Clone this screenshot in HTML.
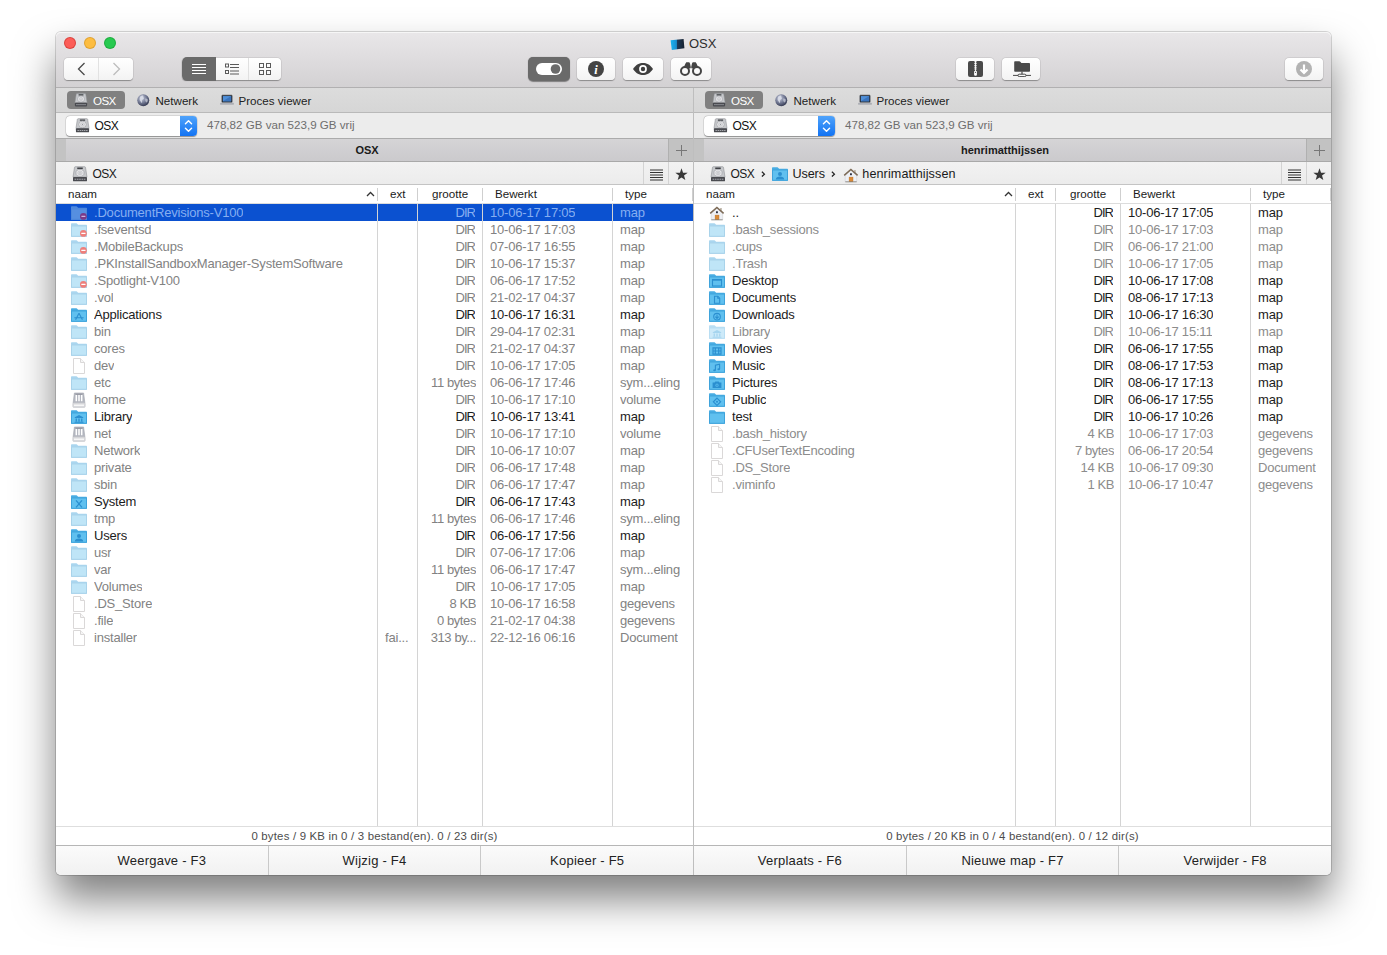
<!DOCTYPE html>
<html lang="nl"><head><meta charset="utf-8"><title>OSX</title>
<style>
*{box-sizing:border-box;margin:0;padding:0}
html,body{width:1387px;height:955px;background:#fff;overflow:hidden}
body{font-family:"Liberation Sans",sans-serif;font-size:13px;color:#1c1c1c;position:relative}
.win{position:absolute;left:56px;top:32px;width:1275px;height:843px;border-radius:5px;background:#fff;
 box-shadow:0 0 0 1px rgba(0,0,0,.15),0 24px 40px rgba(0,0,0,.5);}
.tb{position:absolute;left:0;top:0;width:1275px;height:56px;border-radius:5px 5px 0 0;
 background:linear-gradient(#e9e7e9,#d3d1d3);border-bottom:1px solid #b1b0b1;box-shadow:inset 0 1px 0 #f6f6f6}
.tl{position:absolute;top:5px;width:12px;height:12px;border-radius:50%}
.tl.r{left:8px;background:#fc5d58;border:1px solid rgba(214,60,54,.85)}
.tl.y{left:28px;background:#fdbd41;border:1px solid rgba(220,158,44,.85)}
.tl.g{left:48px;background:#27c950;border:1px solid rgba(26,168,58,.85)}
.title{position:absolute;left:614px;top:4px;height:16px;line-height:16px;font-size:13px;color:#2c2c2c;white-space:nowrap}
.title svg{position:absolute;left:0;top:1.500px}
.title span{position:absolute;left:19px;top:0}
.btn{position:absolute;top:26px;height:22px;border-radius:4px;background:linear-gradient(#fff,#f3f3f3);
 box-shadow:0 .5px 1px rgba(0,0,0,.32),0 0 0 .5px rgba(0,0,0,.08)}
.btn.dark{background:#6a6a6a;box-shadow:0 .5px 1px rgba(0,0,0,.4)}
.btn svg{position:absolute}
.seg{position:absolute;top:0;height:22px}
.pane{position:absolute;top:56px;width:637px;height:757px}
.lp{left:0}.rp{left:638px}
.mid{position:absolute;left:637px;top:56px;width:1px;height:787px;background:#bebebe}
.fav{position:absolute;left:0;top:0;width:637px;height:25px;background:linear-gradient(#dcdcdc,#d6d6d6);border-bottom:1px solid #b9b9b9}
.favbtn{position:absolute;top:3px;height:18px;line-height:18px;white-space:nowrap;color:#222}
.favbtn .ic{position:absolute;left:6.500px;top:1.500px;width:14px;height:14px}
.favbtn.nw .ic{left:6.500px;top:1.500px;width:14.500px;height:14.500px}.favbtn.pv .ic{left:7.500px;top:1.800px;width:14px;height:14px}
.favbtn .t{position:absolute;left:26px;top:1px;font-size:11.6px}
.favbtn.on{left:11px;width:58px;background:#808080;border-radius:4px;color:#fff}.favbtn.on .t{letter-spacing:-.6px}
.favbtn.nw{left:73.500px}.favbtn.pv{left:156.500px}
.drv{position:absolute;left:0;top:25px;width:637px;height:25px;background:#ececec}
.select{position:absolute;left:10px;top:3px;width:131px;height:20px;border-radius:4px;background:#fff;
 box-shadow:0 .5px 1px rgba(0,0,0,.35),0 0 0 .5px rgba(0,0,0,.12)}
.select .ic{position:absolute;left:9px;top:1.800px;width:15px;height:15px}
.select .t{position:absolute;left:28.500px;top:2px;font-size:12px;letter-spacing:-.5px;line-height:16px;color:#111}
.select .arr{position:absolute;right:0;top:0;width:17px;height:20px;border-radius:0 4px 4px 0;background:linear-gradient(#4fa3fb,#1273f3)}
.free{position:absolute;left:151px;top:4px;font-size:11.6px;line-height:16px;color:#6e6e6e;white-space:nowrap}
.tabs{position:absolute;left:0;top:50px;width:637px;height:24px;background:linear-gradient(#d5d4d6,#cbcacd);border-top:1px solid #ababab;border-bottom:1px solid #a9a9a9}
.tabs .stub{position:absolute;left:0;top:0;width:10px;height:22px;background:#c3c3c3}
.tabname{position:absolute;left:10px;width:602px;top:0;height:22px;line-height:23px;text-align:center;font-weight:bold;font-size:11px;color:#1a1a1a}
.plus{position:absolute;left:612px;top:0;width:25px;height:22px;background:#c2c2c2;border-left:1px solid #b0b0b0}
.plus svg{position:absolute;left:6px;top:5px}
.path{position:absolute;left:0;top:74px;width:637px;height:23px;background:linear-gradient(#f2f2f2,#ececec);border-bottom:1px solid #c4c4c4}
.crumb{position:absolute;left:0;top:0;height:22px;width:580px;font-size:12.6px;color:#1a1a1a;white-space:nowrap}
.crumb .ic,.crumb .t,.crumb .sep{position:absolute}
.crumb .t{top:4px;line-height:17px;letter-spacing:-.1px}
.crumb .t.osx{font-size:12px;letter-spacing:-.5px}
.crumb .sep{top:8.500px}
.pbtn{position:absolute;top:0;height:22px;width:25px;border-left:1px solid #d3d3d3;text-align:center}
.pbtn.lst{left:587px}.pbtn.star{left:612px}.pbtn.star svg{position:absolute;left:5.500px;top:6px}
.pbtn.lst svg{position:absolute;left:6px;top:6.500px}
.hdr{position:absolute;left:0;top:97px;width:637px;height:19px;background:#fff;border-bottom:1px solid #dcdcdc;font-size:11.6px;color:#1a1a1a}
.hdr .h{position:absolute;top:1px;line-height:15px}
.hn{left:12px}.he{left:334px}.hs{left:376px}.hd{left:439px}.ht{left:569px}
.sort{position:absolute;left:310px;top:6px}
.sort svg{display:block}
.hdr i{position:absolute;top:3px;width:1px;height:13px;background:#cfcfcf}
.hs1{left:321px}.hs2{left:361px}.hs3{left:426px}.hs4{left:556px}.hs5{left:636px}
.list{position:absolute;left:0;top:116px;width:637px;height:622px;background:#fff;overflow:hidden}
.v{position:absolute;top:0;width:1px;height:622px;background:#d4d4d4;z-index:2}
.v1{left:321px}.v2{left:361px}.v3{left:426px}.v4{left:556px}
.row{position:relative;height:17px;line-height:17px;white-space:nowrap;color:#1c1c1c;letter-spacing:-.2px}
.row.hid{color:#828282}.rp .row.hid{color:#8c8c8c}
.row.sel{background:#0b51d0;color:#86aef0}
.row .ic{position:absolute;left:15px;top:1px}
.c{position:absolute;top:0;height:17px;overflow:hidden}
.nm{left:38px}.ex{left:329px}.sz{left:362px;width:58px;text-align:right;letter-spacing:-.4px}.sz.dir{letter-spacing:-1.100px;width:56.700px}.dt{left:434px}.ty{left:564px}
.status{position:absolute;left:0;top:738px;width:637px;height:19px;border-top:1px solid #dedede;background:#fff;text-align:center;font-size:11.4px;letter-spacing:.2px;line-height:18px;color:#4c4c4c}
.fbar{position:absolute;left:0;top:813px;width:1275px;height:30px;border-top:1px solid #b6b6b6;border-radius:0 0 5px 5px;
 background:linear-gradient(#fbfbfb,#f1f1f1);display:flex;overflow:hidden}
.fbar span{flex:1 1 0;text-align:center;line-height:30.500px;font-size:13px;letter-spacing:.22px;color:#222;border-left:1px solid #c9c9c9}
.fbar span:first-child{border-left:0}

</style></head><body>
<div class="win">
<div class="tb">
  <i class="tl r"></i><i class="tl y"></i><i class="tl g"></i>
  <div class="title"><svg width="15" height="13" viewBox="0 0 15 13"><defs><linearGradient id="tg" x1="0" y1="0" x2="1" y2="0"><stop offset="0" stop-color="#19b4f0"/><stop offset=".42" stop-color="#1a8fd0"/><stop offset=".5" stop-color="#1d3a58"/><stop offset="1" stop-color="#16202e"/></linearGradient></defs><path d="M.6 2.300 13.600 .900l.8 9.400L1.800 12z" fill="url(#tg)"/></svg><span>OSX</span></div>
  <div class="btn" style="left:8px;width:69px">
    <svg style="left:13px;top:4px" width="9" height="14" viewBox="0 0 9 14"><path d="M7.500 1 1.500 7l6 6" fill="none" stroke="#4a4a4a" stroke-width="1.300"/></svg>
    <i style="position:absolute;left:34px;top:0;width:1px;height:22px;background:#e2e2e2"></i>
    <svg style="left:48px;top:4px" width="9" height="14" viewBox="0 0 9 14"><path d="M1.500 1l6 6-6 6" fill="none" stroke="#bdbdbd" stroke-width="1.300"/></svg>
  </div>
  <div class="btn" style="left:126px;width:99px">
    <span class="seg" style="left:0;top:-1px;height:24px;width:34px;background:#6a6a6a;border-radius:5px 0 0 5px">
      <svg style="left:10px;top:6px" width="14" height="12" viewBox="0 0 14 12"><path d="M0 1.500h14M0 4.500h14M0 7.500h14M0 10.500h14" stroke="#fff" stroke-width="1.200"/></svg></span>
    <i style="position:absolute;left:66px;top:0;width:1px;height:22px;background:#e0e0e0"></i>
    <svg style="left:43px;top:5px" width="14" height="12" viewBox="0 0 14 12"><path d="M5 1.500h9M5 4.500h9M5 8h9M5 11h9" stroke="#5a5a5a" stroke-width="1"/><rect x=".5" y="1" width="3" height="3" fill="none" stroke="#5a5a5a"/><rect x=".5" y="7.500" width="3" height="3" fill="none" stroke="#5a5a5a"/></svg>
    <svg style="left:77px;top:5px" width="12" height="12" viewBox="0 0 12 12"><rect x=".5" y=".5" width="4" height="4" fill="none" stroke="#5a5a5a"/><rect x="7.500" y=".5" width="4" height="4" fill="none" stroke="#5a5a5a"/><rect x=".5" y="7.500" width="4" height="4" fill="none" stroke="#5a5a5a"/><rect x="7.500" y="7.500" width="4" height="4" fill="none" stroke="#5a5a5a"/></svg>
  </div>
  <div class="btn dark" style="left:472px;width:42px;top:25px;height:24px;border-radius:5px">
    <svg style="left:8px;top:6px" width="26" height="12" viewBox="0 0 26 12"><rect x="0" y="0" width="26" height="12" rx="6" fill="#fff"/><circle cx="19.500" cy="6" r="4.800" fill="#6a6a6a"/></svg>
  </div>
  <div class="btn" style="left:521px;width:38px">
    <svg style="left:11px;top:3px" width="16" height="16" viewBox="0 0 16 16"><circle cx="8" cy="8" r="8" fill="#444"/><text x="8.100" y="12.600" text-anchor="middle" font-family="Liberation Serif,serif" font-style="italic" font-weight="bold" font-size="12.500" fill="#fff">i</text></svg>
  </div>
  <div class="btn" style="left:567px;width:40px">
    <svg style="left:10px;top:5px" width="20" height="12" viewBox="0 0 20 12"><path d="M0 6C3 1.500 6.500 0 10 0s7 1.500 10 6c-3 4.500-6.500 6-10 6S3 10.500 0 6z" fill="#3f3f3f"/><circle cx="10" cy="6" r="3.900" fill="#fff"/><circle cx="10" cy="6" r="2.200" fill="#3f3f3f"/></svg>
  </div>
  <div class="btn" style="left:615px;width:40px">
    <svg style="left:8px;top:4px" width="24" height="14" viewBox="0 0 24 14"><path d="M6.500 1.600 7.300 .3h3l.7 1.300.8 3.400h.4l.8-3.400.7-1.300h3l.8 1.300L20.500 8h-5V6.600h-7V8h-5z" fill="#444"/><circle cx="6" cy="9" r="4" fill="#fafafa" stroke="#444" stroke-width="2"/><circle cx="18" cy="9" r="4" fill="#fafafa" stroke="#444" stroke-width="2"/><circle cx="12" cy="6.300" r=".8" fill="#fafafa"/></svg>
  </div>
  <div class="btn" style="left:900px;width:38px">
    <svg style="left:12px;top:3px" width="15" height="16" viewBox="0 0 15 16"><rect x="0" y="0" width="15" height="16" rx="2" fill="#4a4a4a"/><path d="M6.500 0h2v10h-2z" fill="#4a4a4a"/><path d="M6.300 .8h2.400M6.300 2.600h2.400M6.300 4.400h2.400M6.300 6.200h2.400M6.300 8h2.400" stroke="#fff" stroke-width="1"/><path d="M7.500 0v10" stroke="#fff" stroke-width=".9"/><rect x="6.100" y="9.800" width="2.800" height="5" rx="1" fill="#fff"/><circle cx="7.500" cy="11.300" r=".6" fill="#4a4a4a"/></svg>
  </div>
  <div class="btn" style="left:946px;width:38px">
    <svg style="left:11px;top:3px" width="18" height="16" viewBox="0 0 18 16"><path d="M1.200 1c0-.5.300-.8.800-.8h4.300c.4 0 .7.200 1 .5l1.100 1.300h7.800c.5 0 .8.300.8.800V10c0 .5-.3.800-.8.800H2c-.5 0-.8-.3-.8-.8z" fill="#4a4a4a"/><path d="M9 10.500v3.200" stroke="#4a4a4a" stroke-width="1.200"/><path d="M0 14.400h18" stroke="#4a4a4a" stroke-width="1"/><rect x="5" y="13.200" width="8" height="2.400" rx="1.200" fill="#fafafa" stroke="#4a4a4a" stroke-width="1"/></svg>
  </div>
  <div class="btn" style="left:1229px;width:38px">
    <svg style="left:11px;top:3px" width="16" height="16" viewBox="0 0 16 16"><circle cx="8" cy="8" r="8" fill="#b3b3b3"/><path d="M8 3.500v8M4.500 8.500 8 12l3.500-3.500" fill="none" stroke="#fff" stroke-width="2.200"/></svg>
  </div>
</div>


<div class="pane lp">
  <div class="fav">
    <span class="favbtn on"><svg class="ic" width="16" height="16" viewBox="0 0 16 16"><path d="M3.400 .700h9.200c.5 0 .8.300.9.700l1.500 9.800H1l1.500-9.800c.1-.4.400-.7.900-.7z" fill="#c6c8cb" stroke="#8d8f94" stroke-width=".6"/><rect x="5.200" y="1.500" width="5.600" height="1.400" rx=".3" fill="#3e4045"/><ellipse cx="8" cy="6.900" rx="4.100" ry="3.500" fill="#e6e6e8" stroke="#a0a2a7" stroke-width=".7"/><ellipse cx="8" cy="6.900" rx="2.100" ry="1.800" fill="none" stroke="#b4b6bb" stroke-width=".6"/><circle cx="8" cy="6.900" r=".7" fill="#9a9ca1"/><rect x="1" y="11" width="14" height="4.300" rx=".9" fill="#4a4b50"/><path d="M2.600 13.300h10.800" stroke="#a6a8ad" stroke-width="1.100" stroke-dasharray="1.600 .7"/></svg><span class="t">OSX</span></span>
    <span class="favbtn nw"><svg class="ic" width="16" height="16" viewBox="0 0 16 16"><defs><radialGradient id="gg" cx=".38" cy=".32" r=".75"><stop offset="0" stop-color="#c9cdde"/><stop offset=".55" stop-color="#6f7690"/><stop offset="1" stop-color="#2b3048"/></radialGradient></defs><circle cx="8" cy="8" r="6.600" fill="url(#gg)"/><path d="M5 3.500c1-.8 2.300-.9 3.200-.4-.4 1-.2 1.800.6 2.400-.2 1.100-1.100 1.400-1.900 2.200-.5 1 .3 2.100-.4 3.300-1-.7-1.300-1.800-2.100-2.700-.6-1-.4-3.400.6-4.800z" fill="#dfe2ec" opacity=".8"/><path d="M10.200 6.200c1-.3 2 .2 2.800 1 .2 1.300-.3 2.500-1.300 3.400-.8-.6-1.500-1.500-1.500-2.600z" fill="#dfe2ec" opacity=".6"/></svg><span class="t">Netwerk</span></span>
    <span class="favbtn pv"><svg class="ic" width="16" height="16" viewBox="0 0 16 16"><rect x="2.200" y="2.500" width="11.600" height="8" rx=".6" fill="#2e3540" stroke="#20242c" stroke-width=".6"/><rect x="3.300" y="3.500" width="9.400" height="6" fill="#4f8fd8"/><path d="M3.300 9.500 12.700 3.500v6z" fill="#3a74bd"/><path d="M1 11.300h14l.6 1.600H.400z" fill="#b9bcc4" stroke="#8b8e96" stroke-width=".5"/></svg><span class="t">Proces viewer</span></span>
  </div>
  <div class="drv">
    <span class="select"><svg class="ic" width="16" height="16" viewBox="0 0 16 16"><path d="M3.400 .700h9.200c.5 0 .8.300.9.700l1.500 9.800H1l1.500-9.800c.1-.4.400-.7.900-.7z" fill="#c6c8cb" stroke="#8d8f94" stroke-width=".6"/><rect x="5.200" y="1.500" width="5.600" height="1.400" rx=".3" fill="#3e4045"/><ellipse cx="8" cy="6.900" rx="4.100" ry="3.500" fill="#e6e6e8" stroke="#a0a2a7" stroke-width=".7"/><ellipse cx="8" cy="6.900" rx="2.100" ry="1.800" fill="none" stroke="#b4b6bb" stroke-width=".6"/><circle cx="8" cy="6.900" r=".7" fill="#9a9ca1"/><rect x="1" y="11" width="14" height="4.300" rx=".9" fill="#4a4b50"/><path d="M2.600 13.300h10.800" stroke="#a6a8ad" stroke-width="1.100" stroke-dasharray="1.600 .7"/></svg><span class="t">OSX</span><span class="arr"><svg width="17" height="20" viewBox="0 0 17 21"><path d="M5.300 8.200 8.500 5l3.200 3.200M5.300 12.800 8.500 16l3.200-3.200" fill="none" stroke="#fff" stroke-width="1.500" stroke-linecap="round" stroke-linejoin="round"/></svg></span></span>
    <span class="free">478,82 GB van 523,9 GB vrij</span>
  </div>
  <div class="tabs"><span class="stub"></span><span class="tabname">OSX</span><span class="plus"><svg width="13" height="13" viewBox="0 0 13 13"><path d="M6.500 1v11M1 6.500h11" stroke="#777" stroke-width="1"/></svg></span></div>
  <div class="path"><span class="crumb"><svg class="ic" style="left:16px;top:4px" width="16" height="16" viewBox="0 0 16 16"><path d="M3.400 .700h9.200c.5 0 .8.300.9.700l1.500 9.800H1l1.500-9.800c.1-.4.400-.7.900-.7z" fill="#c6c8cb" stroke="#8d8f94" stroke-width=".6"/><rect x="5.200" y="1.500" width="5.600" height="1.400" rx=".3" fill="#3e4045"/><ellipse cx="8" cy="6.900" rx="4.100" ry="3.500" fill="#e6e6e8" stroke="#a0a2a7" stroke-width=".7"/><ellipse cx="8" cy="6.900" rx="2.100" ry="1.800" fill="none" stroke="#b4b6bb" stroke-width=".6"/><circle cx="8" cy="6.900" r=".7" fill="#9a9ca1"/><rect x="1" y="11" width="14" height="4.300" rx=".9" fill="#4a4b50"/><path d="M2.600 13.300h10.800" stroke="#a6a8ad" stroke-width="1.100" stroke-dasharray="1.600 .7"/></svg><span class="t osx" style="left:36.500px">OSX</span></span><span class="pbtn lst"><svg width="13" height="12" viewBox="0 0 13 12"><path d="M0 1h13M0 3.500h13M0 6h13M0 8.500h13M0 11h13" stroke="#333" stroke-width="1"/></svg></span><span class="pbtn star"><svg width="13" height="13" viewBox="0 0 13 13"><path d="M6.50 0.30L8.06 4.66L12.68 4.79L9.02 7.62L10.32 12.06L6.50 9.45L2.68 12.06L3.98 7.62L0.32 4.79L4.94 4.66z" fill="#383838"/></svg></span></div>
  <div class="hdr"><span class="h hn">naam</span><span class="sort"><svg width="9" height="6" viewBox="0 0 9 6"><path d="M1 5 4.500 1.500 8 5" fill="none" stroke="#333" stroke-width="1.300"/></svg></span><span class="h he">ext</span><span class="h hs">grootte</span><span class="h hd">Bewerkt</span><span class="h ht">type</span>
    <i class="hs1"></i><i class="hs2"></i><i class="hs3"></i><i class="hs4"></i><i class="hs5"></i></div>
  <div class="list">
    <i class="v v1"></i><i class="v v2"></i><i class="v v3"></i><i class="v v4"></i>
<div class="row hid sel"><svg class="ic" width="16" height="16" viewBox="0 0 16 16"><g opacity=".42"><path d="M0 2.300c0-.6.4-1 1-1h4.300c.5 0 .8.200 1.100.6l.7.900H15c.6 0 1 .4 1 1V14.800H0z" fill="#aad6ef"/><path d="M.5 4h15v10.300H.5z" fill="#bfe5f7" stroke="#a9d3ea" stroke-width="1"/></g><circle cx="12.400" cy="11.400" r="3.400" fill="#7a3a88"/><rect x="10.400" y="10.800" width="4" height="1.200" rx=".3" fill="#c9b3e2"/></svg><span class="c nm">.DocumentRevisions-V100</span><span class="c ex"></span><span class="c sz dir">DIR</span><span class="c dt">10-06-17 17:05</span><span class="c ty">map</span></div>
<div class="row hid"><svg class="ic" width="16" height="16" viewBox="0 0 16 16"><g><path d="M0 2.300c0-.6.4-1 1-1h4.300c.5 0 .8.200 1.100.6l.7.900H15c.6 0 1 .4 1 1V14.800H0z" fill="#aad6ef"/><path d="M.5 4h15v10.300H.5z" fill="#bfe5f7" stroke="#a9d3ea" stroke-width="1"/></g><circle cx="12.400" cy="11.400" r="3.400" fill="#ef7f7b"/><rect x="10.300" y="10.700" width="4.200" height="1.400" rx=".3" fill="#fff"/></svg><span class="c nm">.fseventsd</span><span class="c ex"></span><span class="c sz dir">DIR</span><span class="c dt">10-06-17 17:03</span><span class="c ty">map</span></div>
<div class="row hid"><svg class="ic" width="16" height="16" viewBox="0 0 16 16"><g><path d="M0 2.300c0-.6.4-1 1-1h4.300c.5 0 .8.200 1.100.6l.7.900H15c.6 0 1 .4 1 1V14.800H0z" fill="#aad6ef"/><path d="M.5 4h15v10.300H.5z" fill="#bfe5f7" stroke="#a9d3ea" stroke-width="1"/></g><circle cx="12.400" cy="11.400" r="3.400" fill="#ef7f7b"/><rect x="10.300" y="10.700" width="4.200" height="1.400" rx=".3" fill="#fff"/></svg><span class="c nm">.MobileBackups</span><span class="c ex"></span><span class="c sz dir">DIR</span><span class="c dt">07-06-17 16:55</span><span class="c ty">map</span></div>
<div class="row hid"><svg class="ic" width="16" height="16" viewBox="0 0 16 16"><g><path d="M0 2.300c0-.6.4-1 1-1h4.300c.5 0 .8.200 1.100.6l.7.900H15c.6 0 1 .4 1 1V14.800H0z" fill="#aad6ef"/><path d="M.5 4h15v10.300H.5z" fill="#bfe5f7" stroke="#a9d3ea" stroke-width="1"/></g></svg><span class="c nm">.PKInstallSandboxManager-SystemSoftware</span><span class="c ex"></span><span class="c sz dir">DIR</span><span class="c dt">10-06-17 15:37</span><span class="c ty">map</span></div>
<div class="row hid"><svg class="ic" width="16" height="16" viewBox="0 0 16 16"><g><path d="M0 2.300c0-.6.4-1 1-1h4.300c.5 0 .8.200 1.100.6l.7.900H15c.6 0 1 .4 1 1V14.800H0z" fill="#aad6ef"/><path d="M.5 4h15v10.300H.5z" fill="#bfe5f7" stroke="#a9d3ea" stroke-width="1"/></g><circle cx="12.400" cy="11.400" r="3.400" fill="#ef7f7b"/><rect x="10.300" y="10.700" width="4.200" height="1.400" rx=".3" fill="#fff"/></svg><span class="c nm">.Spotlight-V100</span><span class="c ex"></span><span class="c sz dir">DIR</span><span class="c dt">06-06-17 17:52</span><span class="c ty">map</span></div>
<div class="row hid"><svg class="ic" width="16" height="16" viewBox="0 0 16 16"><g><path d="M0 2.300c0-.6.4-1 1-1h4.300c.5 0 .8.200 1.100.6l.7.900H15c.6 0 1 .4 1 1V14.800H0z" fill="#aad6ef"/><path d="M.5 4h15v10.300H.5z" fill="#bfe5f7" stroke="#a9d3ea" stroke-width="1"/></g></svg><span class="c nm">.vol</span><span class="c ex"></span><span class="c sz dir">DIR</span><span class="c dt">21-02-17 04:37</span><span class="c ty">map</span></div>
<div class="row"><svg class="ic" width="16" height="16" viewBox="0 0 16 16"><g><path d="M0 2.300c0-.6.4-1 1-1h4.300c.5 0 .8.200 1.100.6l.7.900H15c.6 0 1 .4 1 1V14.800H0z" fill="#49ade3"/><path d="M.5 4h15v10.300H.5z" fill="#60c0ef" stroke="#3fa3db" stroke-width="1"/><path d="M8 6.2 4.6 12.8M8 6.2l3.4 6.6M3.4 10.8h9.2" stroke="#2b8fd0" stroke-width="1.1" fill="none"/></g></svg><span class="c nm">Applications</span><span class="c ex"></span><span class="c sz dir">DIR</span><span class="c dt">10-06-17 16:31</span><span class="c ty">map</span></div>
<div class="row hid"><svg class="ic" width="16" height="16" viewBox="0 0 16 16"><g><path d="M0 2.300c0-.6.4-1 1-1h4.300c.5 0 .8.200 1.100.6l.7.900H15c.6 0 1 .4 1 1V14.800H0z" fill="#aad6ef"/><path d="M.5 4h15v10.300H.5z" fill="#bfe5f7" stroke="#a9d3ea" stroke-width="1"/></g></svg><span class="c nm">bin</span><span class="c ex"></span><span class="c sz dir">DIR</span><span class="c dt">29-04-17 02:31</span><span class="c ty">map</span></div>
<div class="row hid"><svg class="ic" width="16" height="16" viewBox="0 0 16 16"><g><path d="M0 2.300c0-.6.4-1 1-1h4.300c.5 0 .8.200 1.100.6l.7.900H15c.6 0 1 .4 1 1V14.800H0z" fill="#aad6ef"/><path d="M.5 4h15v10.300H.5z" fill="#bfe5f7" stroke="#a9d3ea" stroke-width="1"/></g></svg><span class="c nm">cores</span><span class="c ex"></span><span class="c sz dir">DIR</span><span class="c dt">21-02-17 04:37</span><span class="c ty">map</span></div>
<div class="row hid"><svg class="ic" width="16" height="16" viewBox="0 0 16 16"><path d="M2.500 .500h7l4 4v11h-11z" fill="#fff" stroke="#dad8d8" stroke-width="1"/><path d="M9.500 .500v4h4" fill="#f6f6f6" stroke="#dad8d8" stroke-width="1"/></svg><span class="c nm">dev</span><span class="c ex"></span><span class="c sz dir">DIR</span><span class="c dt">10-06-17 17:05</span><span class="c ty">map</span></div>
<div class="row hid"><svg class="ic" width="16" height="16" viewBox="0 0 16 16"><g><path d="M0 2.300c0-.6.4-1 1-1h4.300c.5 0 .8.200 1.100.6l.7.900H15c.6 0 1 .4 1 1V14.800H0z" fill="#aad6ef"/><path d="M.5 4h15v10.300H.5z" fill="#bfe5f7" stroke="#a9d3ea" stroke-width="1"/></g></svg><span class="c nm">etc</span><span class="c ex"></span><span class="c sz">11 bytes</span><span class="c dt">06-06-17 17:46</span><span class="c ty">sym...eling</span></div>
<div class="row hid"><svg class="ic" width="16" height="16" viewBox="0 0 16 16"><path d="M3.400 1h9.200l1.300 10H2.100z" fill="#b3b6bf" stroke="#a3a6ae" stroke-width=".6"/><path d="M5.300 2.600v6.600M8 2.600v6.600M10.700 2.600v6.600" stroke="#fff" stroke-width="1.500"/><path d="M4.400 2.300h7.200" stroke="#8f929b" stroke-width="1"/><rect x="1.800" y="10.800" width="12.400" height="4.600" rx="1" fill="#dadbde" stroke="#c2c3c8" stroke-width=".6"/><rect x="3" y="12.600" width="10" height="1.300" fill="#fafafa"/></svg><span class="c nm">home</span><span class="c ex"></span><span class="c sz dir">DIR</span><span class="c dt">10-06-17 17:10</span><span class="c ty">volume</span></div>
<div class="row"><svg class="ic" width="16" height="16" viewBox="0 0 16 16"><g><path d="M0 2.300c0-.6.4-1 1-1h4.300c.5 0 .8.200 1.100.6l.7.900H15c.6 0 1 .4 1 1V14.800H0z" fill="#49ade3"/><path d="M.5 4h15v10.300H.5z" fill="#60c0ef" stroke="#3fa3db" stroke-width="1"/><path d="M8 6 3.8 8.2v.8h8.4v-.8zM4.6 9.4h1.3v3H4.600zM7.350 9.4h1.3v3h-1.3zM10.100 9.400h1.300v3h-1.300zM3.600 12.800h8.800v1H3.600z" fill="#2b8fd0"/></g></svg><span class="c nm">Library</span><span class="c ex"></span><span class="c sz dir">DIR</span><span class="c dt">10-06-17 13:41</span><span class="c ty">map</span></div>
<div class="row hid"><svg class="ic" width="16" height="16" viewBox="0 0 16 16"><path d="M3.400 1h9.200l1.300 10H2.100z" fill="#b3b6bf" stroke="#a3a6ae" stroke-width=".6"/><path d="M5.300 2.600v6.600M8 2.600v6.600M10.700 2.600v6.600" stroke="#fff" stroke-width="1.500"/><path d="M4.400 2.300h7.200" stroke="#8f929b" stroke-width="1"/><rect x="1.800" y="10.800" width="12.400" height="4.600" rx="1" fill="#dadbde" stroke="#c2c3c8" stroke-width=".6"/><rect x="3" y="12.600" width="10" height="1.300" fill="#fafafa"/></svg><span class="c nm">net</span><span class="c ex"></span><span class="c sz dir">DIR</span><span class="c dt">10-06-17 17:10</span><span class="c ty">volume</span></div>
<div class="row hid"><svg class="ic" width="16" height="16" viewBox="0 0 16 16"><g><path d="M0 2.300c0-.6.4-1 1-1h4.300c.5 0 .8.200 1.100.6l.7.900H15c.6 0 1 .4 1 1V14.800H0z" fill="#aad6ef"/><path d="M.5 4h15v10.300H.5z" fill="#bfe5f7" stroke="#a9d3ea" stroke-width="1"/></g></svg><span class="c nm">Network</span><span class="c ex"></span><span class="c sz dir">DIR</span><span class="c dt">10-06-17 10:07</span><span class="c ty">map</span></div>
<div class="row hid"><svg class="ic" width="16" height="16" viewBox="0 0 16 16"><g><path d="M0 2.300c0-.6.4-1 1-1h4.300c.5 0 .8.200 1.100.6l.7.900H15c.6 0 1 .4 1 1V14.800H0z" fill="#aad6ef"/><path d="M.5 4h15v10.300H.5z" fill="#bfe5f7" stroke="#a9d3ea" stroke-width="1"/></g></svg><span class="c nm">private</span><span class="c ex"></span><span class="c sz dir">DIR</span><span class="c dt">06-06-17 17:48</span><span class="c ty">map</span></div>
<div class="row hid"><svg class="ic" width="16" height="16" viewBox="0 0 16 16"><g><path d="M0 2.300c0-.6.4-1 1-1h4.300c.5 0 .8.200 1.100.6l.7.900H15c.6 0 1 .4 1 1V14.800H0z" fill="#aad6ef"/><path d="M.5 4h15v10.300H.5z" fill="#bfe5f7" stroke="#a9d3ea" stroke-width="1"/></g></svg><span class="c nm">sbin</span><span class="c ex"></span><span class="c sz dir">DIR</span><span class="c dt">06-06-17 17:47</span><span class="c ty">map</span></div>
<div class="row"><svg class="ic" width="16" height="16" viewBox="0 0 16 16"><g><path d="M0 2.300c0-.6.4-1 1-1h4.300c.5 0 .8.200 1.100.6l.7.900H15c.6 0 1 .4 1 1V14.800H0z" fill="#49ade3"/><path d="M.5 4h15v10.300H.5z" fill="#60c0ef" stroke="#3fa3db" stroke-width="1"/><path d="M5 6.300l6 7M11 6.300l-6 7" stroke="#2b8fd0" stroke-width="1.300" fill="none"/></g></svg><span class="c nm">System</span><span class="c ex"></span><span class="c sz dir">DIR</span><span class="c dt">06-06-17 17:43</span><span class="c ty">map</span></div>
<div class="row hid"><svg class="ic" width="16" height="16" viewBox="0 0 16 16"><g><path d="M0 2.300c0-.6.4-1 1-1h4.300c.5 0 .8.200 1.100.6l.7.900H15c.6 0 1 .4 1 1V14.800H0z" fill="#aad6ef"/><path d="M.5 4h15v10.300H.5z" fill="#bfe5f7" stroke="#a9d3ea" stroke-width="1"/></g></svg><span class="c nm">tmp</span><span class="c ex"></span><span class="c sz">11 bytes</span><span class="c dt">06-06-17 17:46</span><span class="c ty">sym...eling</span></div>
<div class="row"><svg class="ic" width="16" height="16" viewBox="0 0 16 16"><g><path d="M0 2.300c0-.6.4-1 1-1h4.300c.5 0 .8.200 1.100.6l.7.900H15c.6 0 1 .4 1 1V14.800H0z" fill="#49ade3"/><path d="M.5 4h15v10.300H.5z" fill="#60c0ef" stroke="#3fa3db" stroke-width="1"/><circle cx="8" cy="8" r="2" fill="#2b8fd0"/><path d="M3.800 13.600c.2-2.200 1.800-3 4.200-3s4 .8 4.200 3z" fill="#2b8fd0"/></g></svg><span class="c nm">Users</span><span class="c ex"></span><span class="c sz dir">DIR</span><span class="c dt">06-06-17 17:56</span><span class="c ty">map</span></div>
<div class="row hid"><svg class="ic" width="16" height="16" viewBox="0 0 16 16"><g><path d="M0 2.300c0-.6.4-1 1-1h4.300c.5 0 .8.200 1.100.6l.7.900H15c.6 0 1 .4 1 1V14.800H0z" fill="#aad6ef"/><path d="M.5 4h15v10.300H.5z" fill="#bfe5f7" stroke="#a9d3ea" stroke-width="1"/></g></svg><span class="c nm">usr</span><span class="c ex"></span><span class="c sz dir">DIR</span><span class="c dt">07-06-17 17:06</span><span class="c ty">map</span></div>
<div class="row hid"><svg class="ic" width="16" height="16" viewBox="0 0 16 16"><g><path d="M0 2.300c0-.6.4-1 1-1h4.300c.5 0 .8.200 1.100.6l.7.900H15c.6 0 1 .4 1 1V14.800H0z" fill="#aad6ef"/><path d="M.5 4h15v10.300H.5z" fill="#bfe5f7" stroke="#a9d3ea" stroke-width="1"/></g></svg><span class="c nm">var</span><span class="c ex"></span><span class="c sz">11 bytes</span><span class="c dt">06-06-17 17:47</span><span class="c ty">sym...eling</span></div>
<div class="row hid"><svg class="ic" width="16" height="16" viewBox="0 0 16 16"><g><path d="M0 2.300c0-.6.4-1 1-1h4.300c.5 0 .8.200 1.100.6l.7.900H15c.6 0 1 .4 1 1V14.800H0z" fill="#aad6ef"/><path d="M.5 4h15v10.300H.5z" fill="#bfe5f7" stroke="#a9d3ea" stroke-width="1"/></g></svg><span class="c nm">Volumes</span><span class="c ex"></span><span class="c sz dir">DIR</span><span class="c dt">10-06-17 17:05</span><span class="c ty">map</span></div>
<div class="row hid"><svg class="ic" width="16" height="16" viewBox="0 0 16 16"><path d="M2.500 .500h7l4 4v11h-11z" fill="#fff" stroke="#dad8d8" stroke-width="1"/><path d="M9.500 .500v4h4" fill="#f6f6f6" stroke="#dad8d8" stroke-width="1"/></svg><span class="c nm">.DS_Store</span><span class="c ex"></span><span class="c sz">8 KB</span><span class="c dt">10-06-17 16:58</span><span class="c ty">gegevens</span></div>
<div class="row hid"><svg class="ic" width="16" height="16" viewBox="0 0 16 16"><path d="M2.500 .500h7l4 4v11h-11z" fill="#fff" stroke="#dad8d8" stroke-width="1"/><path d="M9.500 .500v4h4" fill="#f6f6f6" stroke="#dad8d8" stroke-width="1"/></svg><span class="c nm">.file</span><span class="c ex"></span><span class="c sz">0 bytes</span><span class="c dt">21-02-17 04:38</span><span class="c ty">gegevens</span></div>
<div class="row hid"><svg class="ic" width="16" height="16" viewBox="0 0 16 16"><path d="M2.500 .500h7l4 4v11h-11z" fill="#fff" stroke="#dad8d8" stroke-width="1"/><path d="M9.500 .500v4h4" fill="#f6f6f6" stroke="#dad8d8" stroke-width="1"/></svg><span class="c nm">installer</span><span class="c ex">fai...</span><span class="c sz">313 by...</span><span class="c dt">22-12-16 06:16</span><span class="c ty">Document</span></div>
  </div>
  <div class="status">0 bytes / 9 KB in 0 / 3 bestand(en). 0 / 23 dir(s)</div>
</div>

<div class="pane rp">
  <div class="fav">
    <span class="favbtn on"><svg class="ic" width="16" height="16" viewBox="0 0 16 16"><path d="M3.400 .700h9.200c.5 0 .8.300.9.700l1.500 9.800H1l1.500-9.800c.1-.4.400-.7.900-.7z" fill="#c6c8cb" stroke="#8d8f94" stroke-width=".6"/><rect x="5.200" y="1.500" width="5.600" height="1.400" rx=".3" fill="#3e4045"/><ellipse cx="8" cy="6.900" rx="4.100" ry="3.500" fill="#e6e6e8" stroke="#a0a2a7" stroke-width=".7"/><ellipse cx="8" cy="6.900" rx="2.100" ry="1.800" fill="none" stroke="#b4b6bb" stroke-width=".6"/><circle cx="8" cy="6.900" r=".7" fill="#9a9ca1"/><rect x="1" y="11" width="14" height="4.300" rx=".9" fill="#4a4b50"/><path d="M2.600 13.300h10.800" stroke="#a6a8ad" stroke-width="1.100" stroke-dasharray="1.600 .7"/></svg><span class="t">OSX</span></span>
    <span class="favbtn nw"><svg class="ic" width="16" height="16" viewBox="0 0 16 16"><defs><radialGradient id="gg" cx=".38" cy=".32" r=".75"><stop offset="0" stop-color="#c9cdde"/><stop offset=".55" stop-color="#6f7690"/><stop offset="1" stop-color="#2b3048"/></radialGradient></defs><circle cx="8" cy="8" r="6.600" fill="url(#gg)"/><path d="M5 3.500c1-.8 2.300-.9 3.200-.4-.4 1-.2 1.800.6 2.400-.2 1.100-1.100 1.400-1.900 2.200-.5 1 .3 2.100-.4 3.300-1-.7-1.300-1.800-2.100-2.700-.6-1-.4-3.400.6-4.800z" fill="#dfe2ec" opacity=".8"/><path d="M10.200 6.200c1-.3 2 .2 2.800 1 .2 1.300-.3 2.500-1.300 3.400-.8-.6-1.500-1.500-1.500-2.600z" fill="#dfe2ec" opacity=".6"/></svg><span class="t">Netwerk</span></span>
    <span class="favbtn pv"><svg class="ic" width="16" height="16" viewBox="0 0 16 16"><rect x="2.200" y="2.500" width="11.600" height="8" rx=".6" fill="#2e3540" stroke="#20242c" stroke-width=".6"/><rect x="3.300" y="3.500" width="9.400" height="6" fill="#4f8fd8"/><path d="M3.300 9.500 12.700 3.500v6z" fill="#3a74bd"/><path d="M1 11.300h14l.6 1.600H.400z" fill="#b9bcc4" stroke="#8b8e96" stroke-width=".5"/></svg><span class="t">Proces viewer</span></span>
  </div>
  <div class="drv">
    <span class="select"><svg class="ic" width="16" height="16" viewBox="0 0 16 16"><path d="M3.400 .700h9.200c.5 0 .8.300.9.700l1.500 9.800H1l1.500-9.800c.1-.4.400-.7.900-.7z" fill="#c6c8cb" stroke="#8d8f94" stroke-width=".6"/><rect x="5.200" y="1.500" width="5.600" height="1.400" rx=".3" fill="#3e4045"/><ellipse cx="8" cy="6.900" rx="4.100" ry="3.500" fill="#e6e6e8" stroke="#a0a2a7" stroke-width=".7"/><ellipse cx="8" cy="6.900" rx="2.100" ry="1.800" fill="none" stroke="#b4b6bb" stroke-width=".6"/><circle cx="8" cy="6.900" r=".7" fill="#9a9ca1"/><rect x="1" y="11" width="14" height="4.300" rx=".9" fill="#4a4b50"/><path d="M2.600 13.300h10.800" stroke="#a6a8ad" stroke-width="1.100" stroke-dasharray="1.600 .7"/></svg><span class="t">OSX</span><span class="arr"><svg width="17" height="20" viewBox="0 0 17 21"><path d="M5.300 8.200 8.500 5l3.200 3.200M5.300 12.800 8.500 16l3.200-3.200" fill="none" stroke="#fff" stroke-width="1.500" stroke-linecap="round" stroke-linejoin="round"/></svg></span></span>
    <span class="free">478,82 GB van 523,9 GB vrij</span>
  </div>
  <div class="tabs"><span class="stub"></span><span class="tabname">henrimatthijssen</span><span class="plus"><svg width="13" height="13" viewBox="0 0 13 13"><path d="M6.500 1v11M1 6.500h11" stroke="#777" stroke-width="1"/></svg></span></div>
  <div class="path"><span class="crumb"><svg class="ic" style="left:16px;top:4px" width="16" height="16" viewBox="0 0 16 16"><path d="M3.400 .700h9.200c.5 0 .8.300.9.700l1.500 9.800H1l1.500-9.800c.1-.4.400-.7.900-.7z" fill="#c6c8cb" stroke="#8d8f94" stroke-width=".6"/><rect x="5.200" y="1.500" width="5.600" height="1.400" rx=".3" fill="#3e4045"/><ellipse cx="8" cy="6.900" rx="4.100" ry="3.500" fill="#e6e6e8" stroke="#a0a2a7" stroke-width=".7"/><ellipse cx="8" cy="6.900" rx="2.100" ry="1.800" fill="none" stroke="#b4b6bb" stroke-width=".6"/><circle cx="8" cy="6.900" r=".7" fill="#9a9ca1"/><rect x="1" y="11" width="14" height="4.300" rx=".9" fill="#4a4b50"/><path d="M2.600 13.300h10.800" stroke="#a6a8ad" stroke-width="1.100" stroke-dasharray="1.600 .7"/></svg><span class="t osx" style="left:36.500px">OSX</span><svg class="sep" style="left:67px" width="4.500" height="6.300" viewBox="0 0 5 7"><path d="M1 .8 3.800 3.500 1 6.200" fill="none" stroke="#222" stroke-width="1.400"/></svg><svg class="ic" style="left:78px;top:4px" width="16" height="16" viewBox="0 0 16 16"><g><path d="M0 2.300c0-.6.4-1 1-1h4.300c.5 0 .8.200 1.100.6l.7.900H15c.6 0 1 .4 1 1V14.800H0z" fill="#49ade3"/><path d="M.5 4h15v10.300H.5z" fill="#60c0ef" stroke="#3fa3db" stroke-width="1"/><circle cx="8" cy="8" r="2" fill="#2b8fd0"/><path d="M3.800 13.600c.2-2.200 1.800-3 4.200-3s4 .8 4.200 3z" fill="#2b8fd0"/></g></svg><span class="t" style="left:98.500px">Users</span><svg class="sep" style="left:137px" width="4.500" height="6.300" viewBox="0 0 5 7"><path d="M1 .8 3.800 3.500 1 6.200" fill="none" stroke="#222" stroke-width="1.400"/></svg><svg class="ic" style="left:148.500px;top:4.500px" width="16" height="16" viewBox="0 0 16 16"><path d="M2.200 8 7.900 3.100l5.800 4.900v6.700H2.200z" fill="#eef0f4" stroke="#c9cbd1" stroke-width=".5"/><rect x="11.100" y="3" width="1.700" height="3" fill="#bdb5a8"/><path d="M1.200 8.400 7.900 2.500l6.700 5.900" fill="none" stroke="#7d6b57" stroke-width="1.500"/><rect x="7" y="6.300" width="1.900" height="1.900" fill="#2d3142"/><rect x="6.100" y="10.100" width="3.900" height="4.600" fill="#da8a37" stroke="#b86f24" stroke-width=".4"/><path d="M2.300 14.800h11.400" stroke="#77736d" stroke-width=".7"/></svg><span class="t" style="left:168.300px;letter-spacing:.1px">henrimatthijssen</span></span><span class="pbtn lst"><svg width="13" height="12" viewBox="0 0 13 12"><path d="M0 1h13M0 3.500h13M0 6h13M0 8.500h13M0 11h13" stroke="#333" stroke-width="1"/></svg></span><span class="pbtn star"><svg width="13" height="13" viewBox="0 0 13 13"><path d="M6.50 0.30L8.06 4.66L12.68 4.79L9.02 7.62L10.32 12.06L6.50 9.45L2.68 12.06L3.98 7.62L0.32 4.79L4.94 4.66z" fill="#383838"/></svg></span></div>
  <div class="hdr"><span class="h hn">naam</span><span class="sort"><svg width="9" height="6" viewBox="0 0 9 6"><path d="M1 5 4.500 1.500 8 5" fill="none" stroke="#333" stroke-width="1.300"/></svg></span><span class="h he">ext</span><span class="h hs">grootte</span><span class="h hd">Bewerkt</span><span class="h ht">type</span>
    <i class="hs1"></i><i class="hs2"></i><i class="hs3"></i><i class="hs4"></i><i class="hs5"></i></div>
  <div class="list">
    <i class="v v1"></i><i class="v v2"></i><i class="v v3"></i><i class="v v4"></i>
<div class="row"><svg class="ic" width="16" height="16" viewBox="0 0 16 16"><path d="M2.200 8 7.900 3.100l5.800 4.900v6.700H2.200z" fill="#eef0f4" stroke="#c9cbd1" stroke-width=".5"/><rect x="11.100" y="3" width="1.700" height="3" fill="#bdb5a8"/><path d="M1.200 8.400 7.900 2.500l6.700 5.900" fill="none" stroke="#7d6b57" stroke-width="1.500"/><rect x="7" y="6.300" width="1.900" height="1.900" fill="#2d3142"/><rect x="6.100" y="10.100" width="3.900" height="4.600" fill="#da8a37" stroke="#b86f24" stroke-width=".4"/><path d="M2.300 14.800h11.400" stroke="#77736d" stroke-width=".7"/></svg><span class="c nm">..</span><span class="c ex"></span><span class="c sz dir">DIR</span><span class="c dt">10-06-17 17:05</span><span class="c ty">map</span></div>
<div class="row hid"><svg class="ic" width="16" height="16" viewBox="0 0 16 16"><g><path d="M0 2.300c0-.6.4-1 1-1h4.300c.5 0 .8.200 1.100.6l.7.900H15c.6 0 1 .4 1 1V14.800H0z" fill="#aad6ef"/><path d="M.5 4h15v10.300H.5z" fill="#bfe5f7" stroke="#a9d3ea" stroke-width="1"/></g></svg><span class="c nm">.bash_sessions</span><span class="c ex"></span><span class="c sz dir">DIR</span><span class="c dt">10-06-17 17:03</span><span class="c ty">map</span></div>
<div class="row hid"><svg class="ic" width="16" height="16" viewBox="0 0 16 16"><g><path d="M0 2.300c0-.6.4-1 1-1h4.300c.5 0 .8.200 1.100.6l.7.900H15c.6 0 1 .4 1 1V14.800H0z" fill="#aad6ef"/><path d="M.5 4h15v10.300H.5z" fill="#bfe5f7" stroke="#a9d3ea" stroke-width="1"/></g></svg><span class="c nm">.cups</span><span class="c ex"></span><span class="c sz dir">DIR</span><span class="c dt">06-06-17 21:00</span><span class="c ty">map</span></div>
<div class="row hid"><svg class="ic" width="16" height="16" viewBox="0 0 16 16"><g><path d="M0 2.300c0-.6.4-1 1-1h4.300c.5 0 .8.200 1.100.6l.7.900H15c.6 0 1 .4 1 1V14.800H0z" fill="#aad6ef"/><path d="M.5 4h15v10.300H.5z" fill="#bfe5f7" stroke="#a9d3ea" stroke-width="1"/></g></svg><span class="c nm">.Trash</span><span class="c ex"></span><span class="c sz dir">DIR</span><span class="c dt">10-06-17 17:05</span><span class="c ty">map</span></div>
<div class="row"><svg class="ic" width="16" height="16" viewBox="0 0 16 16"><g><path d="M0 2.300c0-.6.4-1 1-1h4.300c.5 0 .8.200 1.100.6l.7.900H15c.6 0 1 .4 1 1V14.800H0z" fill="#49ade3"/><path d="M.5 4h15v10.300H.5z" fill="#60c0ef" stroke="#3fa3db" stroke-width="1"/><rect x="3.500" y="6.500" width="9" height="6.500" fill="none" stroke="#2b8fd0" stroke-width="1.100"/><rect x="3.500" y="6.300" width="9" height="1.400" fill="#2b8fd0"/></g></svg><span class="c nm">Desktop</span><span class="c ex"></span><span class="c sz dir">DIR</span><span class="c dt">10-06-17 17:08</span><span class="c ty">map</span></div>
<div class="row"><svg class="ic" width="16" height="16" viewBox="0 0 16 16"><g><path d="M0 2.300c0-.6.4-1 1-1h4.300c.5 0 .8.200 1.100.6l.7.900H15c.6 0 1 .4 1 1V14.800H0z" fill="#49ade3"/><path d="M.5 4h15v10.300H.5z" fill="#60c0ef" stroke="#3fa3db" stroke-width="1"/><path d="M5.500 6.300h3.300l1.900 1.900v5.100H5.500z" fill="none" stroke="#2b8fd0" stroke-width="1.100"/><path d="M8.600 6.300v2.100h2.100" fill="none" stroke="#2b8fd0" stroke-width=".9"/></g></svg><span class="c nm">Documents</span><span class="c ex"></span><span class="c sz dir">DIR</span><span class="c dt">08-06-17 17:13</span><span class="c ty">map</span></div>
<div class="row"><svg class="ic" width="16" height="16" viewBox="0 0 16 16"><g><path d="M0 2.300c0-.6.4-1 1-1h4.300c.5 0 .8.200 1.100.6l.7.900H15c.6 0 1 .4 1 1V14.800H0z" fill="#49ade3"/><path d="M.5 4h15v10.300H.5z" fill="#60c0ef" stroke="#3fa3db" stroke-width="1"/><circle cx="8" cy="9.700" r="3.300" fill="none" stroke="#2b8fd0" stroke-width="1.100"/><path d="M8 7.600v3.300M6.300 9.600 8 11.400l1.700-1.800" stroke="#2b8fd0" stroke-width="1.100" fill="none"/></g></svg><span class="c nm">Downloads</span><span class="c ex"></span><span class="c sz dir">DIR</span><span class="c dt">10-06-17 16:30</span><span class="c ty">map</span></div>
<div class="row hid"><svg class="ic" width="16" height="16" viewBox="0 0 16 16"><g><path d="M0 2.300c0-.6.4-1 1-1h4.300c.5 0 .8.200 1.100.6l.7.900H15c.6 0 1 .4 1 1V14.800H0z" fill="#b9def3"/><path d="M.5 4h15v10.300H.5z" fill="#cdeaf9" stroke="#b9def3" stroke-width="1"/><path d="M8 6 3.8 8.2v.8h8.4v-.8zM4.6 9.4h1.3v3H4.600zM7.350 9.4h1.3v3h-1.3zM10.100 9.400h1.300v3h-1.300zM3.600 12.800h8.800v1H3.600z" fill="#a6d5ef"/></g></svg><span class="c nm">Library</span><span class="c ex"></span><span class="c sz dir">DIR</span><span class="c dt">10-06-17 15:11</span><span class="c ty">map</span></div>
<div class="row"><svg class="ic" width="16" height="16" viewBox="0 0 16 16"><g><path d="M0 2.300c0-.6.4-1 1-1h4.300c.5 0 .8.200 1.100.6l.7.900H15c.6 0 1 .4 1 1V14.800H0z" fill="#49ade3"/><path d="M.5 4h15v10.300H.5z" fill="#60c0ef" stroke="#3fa3db" stroke-width="1"/><path d="M4 6.800h8v6.400H4zM6.300 6.800v6.400M9.700 6.800v6.400M4 10h8" fill="none" stroke="#2b8fd0" stroke-width="1.200"/></g></svg><span class="c nm">Movies</span><span class="c ex"></span><span class="c sz dir">DIR</span><span class="c dt">06-06-17 17:55</span><span class="c ty">map</span></div>
<div class="row"><svg class="ic" width="16" height="16" viewBox="0 0 16 16"><g><path d="M0 2.300c0-.6.4-1 1-1h4.300c.5 0 .8.200 1.100.6l.7.900H15c.6 0 1 .4 1 1V14.800H0z" fill="#49ade3"/><path d="M.5 4h15v10.300H.5z" fill="#60c0ef" stroke="#3fa3db" stroke-width="1"/><path d="M6.400 12.200V7.300l4.200-1v4.900" fill="none" stroke="#2b8fd0" stroke-width="1.100"/><ellipse cx="5.500" cy="12.300" rx="1.300" ry="1" fill="#2b8fd0"/><ellipse cx="9.700" cy="11.300" rx="1.300" ry="1" fill="#2b8fd0"/></g></svg><span class="c nm">Music</span><span class="c ex"></span><span class="c sz dir">DIR</span><span class="c dt">08-06-17 17:53</span><span class="c ty">map</span></div>
<div class="row"><svg class="ic" width="16" height="16" viewBox="0 0 16 16"><g><path d="M0 2.300c0-.6.4-1 1-1h4.300c.5 0 .8.200 1.100.6l.7.900H15c.6 0 1 .4 1 1V14.800H0z" fill="#49ade3"/><path d="M.5 4h15v10.300H.5z" fill="#60c0ef" stroke="#3fa3db" stroke-width="1"/><path d="M3.600 7.600h2l.7-1h3.400l.7 1h2v5.400H3.600z" fill="#2b8fd0"/><circle cx="8" cy="10.200" r="1.700" fill="#5dbdee" stroke="#2b8fd0" stroke-width=".3"/><circle cx="8" cy="10.200" r=".8" fill="#2b8fd0"/></g></svg><span class="c nm">Pictures</span><span class="c ex"></span><span class="c sz dir">DIR</span><span class="c dt">08-06-17 17:13</span><span class="c ty">map</span></div>
<div class="row"><svg class="ic" width="16" height="16" viewBox="0 0 16 16"><g><path d="M0 2.300c0-.6.4-1 1-1h4.300c.5 0 .8.200 1.100.6l.7.900H15c.6 0 1 .4 1 1V14.800H0z" fill="#49ade3"/><path d="M.5 4h15v10.300H.5z" fill="#60c0ef" stroke="#3fa3db" stroke-width="1"/><path d="M8 6.200l3.600 3.600L8 13.400 4.400 9.800z" fill="none" stroke="#2b8fd0" stroke-width="1.200"/><circle cx="8" cy="9.800" r="1" fill="#2b8fd0"/></g></svg><span class="c nm">Public</span><span class="c ex"></span><span class="c sz dir">DIR</span><span class="c dt">06-06-17 17:55</span><span class="c ty">map</span></div>
<div class="row"><svg class="ic" width="16" height="16" viewBox="0 0 16 16"><g><path d="M0 2.300c0-.6.4-1 1-1h4.300c.5 0 .8.200 1.100.6l.7.900H15c.6 0 1 .4 1 1V14.800H0z" fill="#49ade3"/><path d="M.5 4h15v10.300H.5z" fill="#60c0ef" stroke="#3fa3db" stroke-width="1"/></g></svg><span class="c nm">test</span><span class="c ex"></span><span class="c sz dir">DIR</span><span class="c dt">10-06-17 10:26</span><span class="c ty">map</span></div>
<div class="row hid"><svg class="ic" width="16" height="16" viewBox="0 0 16 16"><path d="M2.500 .500h7l4 4v11h-11z" fill="#fff" stroke="#dad8d8" stroke-width="1"/><path d="M9.500 .500v4h4" fill="#f6f6f6" stroke="#dad8d8" stroke-width="1"/></svg><span class="c nm">.bash_history</span><span class="c ex"></span><span class="c sz">4 KB</span><span class="c dt">10-06-17 17:03</span><span class="c ty">gegevens</span></div>
<div class="row hid"><svg class="ic" width="16" height="16" viewBox="0 0 16 16"><path d="M2.500 .500h7l4 4v11h-11z" fill="#fff" stroke="#dad8d8" stroke-width="1"/><path d="M9.500 .500v4h4" fill="#f6f6f6" stroke="#dad8d8" stroke-width="1"/></svg><span class="c nm">.CFUserTextEncoding</span><span class="c ex"></span><span class="c sz">7 bytes</span><span class="c dt">06-06-17 20:54</span><span class="c ty">gegevens</span></div>
<div class="row hid"><svg class="ic" width="16" height="16" viewBox="0 0 16 16"><path d="M2.500 .500h7l4 4v11h-11z" fill="#fff" stroke="#dad8d8" stroke-width="1"/><path d="M9.500 .500v4h4" fill="#f6f6f6" stroke="#dad8d8" stroke-width="1"/></svg><span class="c nm">.DS_Store</span><span class="c ex"></span><span class="c sz">14 KB</span><span class="c dt">10-06-17 09:30</span><span class="c ty">Document</span></div>
<div class="row hid"><svg class="ic" width="16" height="16" viewBox="0 0 16 16"><path d="M2.500 .500h7l4 4v11h-11z" fill="#fff" stroke="#dad8d8" stroke-width="1"/><path d="M9.500 .500v4h4" fill="#f6f6f6" stroke="#dad8d8" stroke-width="1"/></svg><span class="c nm">.viminfo</span><span class="c ex"></span><span class="c sz">1 KB</span><span class="c dt">10-06-17 10:47</span><span class="c ty">gegevens</span></div>
  </div>
  <div class="status">0 bytes / 20 KB in 0 / 4 bestand(en). 0 / 12 dir(s)</div>
</div>
<div class="fbar"><span>Weergave - F3</span><span>Wijzig - F4</span><span>Kopieer - F5</span><span>Verplaats - F6</span><span>Nieuwe map - F7</span><span>Verwijder - F8</span></div>
<i class="mid"></i>
</div>
</body></html>
